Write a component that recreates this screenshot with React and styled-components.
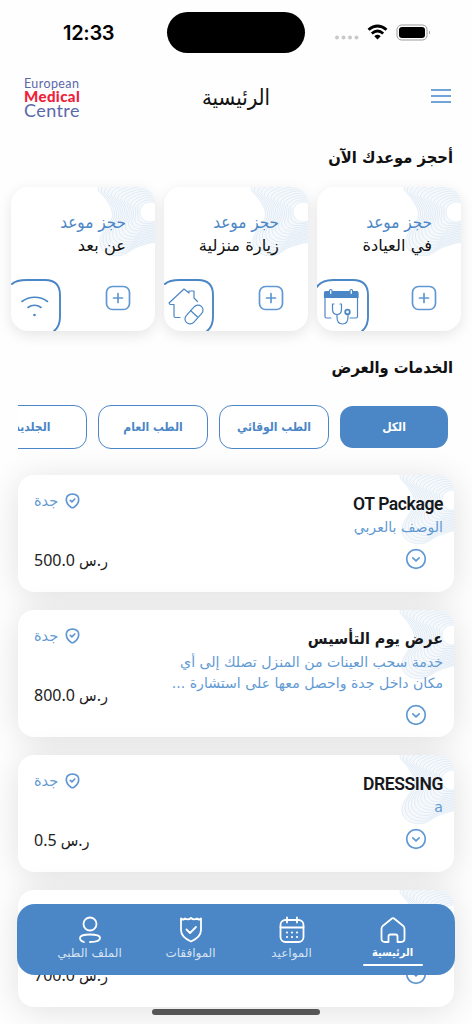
import React from 'react';
import styled, { createGlobalStyle } from 'styled-components';

const BLUE = '#4b86c6';

const GlobalStyle = createGlobalStyle`
  * {
    box-sizing: border-box;
  }

  body {
    margin: 0;
    background: #fefefe;
    font-family: 'DejaVu Sans Condensed', 'DejaVu Sans', sans-serif;
  }
`;

const Screen = styled.div`
  position: relative;
  width: 472px;
  height: 1024px;
  overflow: hidden;
  direction: rtl;
  display: flex;
  flex-direction: column;
`;

const StatusBar = styled.div`
  direction: ltr;
  display: grid;
  grid-template-columns: 167px 138px 167px;
  height: 65px;
  flex: none;
  align-items: center;
`;

const Time = styled.span`
  padding-left: 63px;
  font: 600 20px Inter, sans-serif;
  letter-spacing: -0.3px;
  color: #000;
`;

const Island = styled.div`
  height: 41px;
  border-radius: 21px;
  background: #000;
`;

const StatusIcons = styled.div`
  display: flex;
  align-items: center;
  padding-left: 29px;
`;

const Header = styled.header`
  display: grid;
  grid-template-columns: 100px 1fr 100px;
  align-items: center;
  height: 64px;
  flex: none;
`;

const MenuButton = styled.button`
  display: block;
  justify-self: start;
  margin-right: 21px;
  padding: 0;
  border: none;
  background: none;
`;

const PageTitle = styled.h1`
  margin: 0;
  text-align: center;
  font-size: 22px;
  font-weight: 400;
  color: #111;
`;

const Logo = styled.div`
  direction: ltr;
  padding-left: 24px;
  font-family: Lato, sans-serif;
  color: #5a68a8;
`;

const LogoLine = styled.div`
  font-size: ${(p) => p.$size}px;
  line-height: ${(p) => p.$line}px;
  font-weight: ${(p) => (p.$strong ? 900 : 400)};
  color: ${(p) => (p.$strong ? '#ee2139' : 'inherit')};
  letter-spacing: 0.4px;
`;

const SectionTitle = styled.h2`
  margin: 0;
  padding-right: 19px;
  height: ${(p) => p.$height}px;
  line-height: ${(p) => p.$height}px;
  flex: none;
  font-size: 16.4px;
  font-weight: 700;
  color: #111;
`;

const BookingRow = styled.div`
  display: flex;
  gap: 9px;
  padding: 0 11px;
  flex: none;
`;

const BookingCard = styled.div`
  position: relative;
  width: 144px;
  height: 144px;
  border-radius: 17px;
  background: #fff;
  box-shadow: 0 4px 14px rgba(0, 0, 0, 0.1);
  overflow: hidden;
  display: flex;
  flex-direction: column;
  justify-content: space-between;
`;

const BookingText = styled.div`
  position: relative;
  padding: 23px 29px 0 0;
  font-family: 'DejaVu Sans', sans-serif;
  font-size: 16.3px;
  line-height: 24px;
  color: #111;
  white-space: nowrap;
`;

const Accent = styled.div`
  font-family: 'DejaVu Sans Condensed', 'DejaVu Sans', sans-serif;
  font-size: 17px;
  color: ${BLUE};
`;

const BookingFooter = styled.div`
  display: flex;
  justify-content: space-between;
  align-items: flex-start;
  padding-right: 24px;
  height: 52px;
`;

const PlusIcon = styled.svg`
  margin-top: 6px;
`;

const Waves = styled.svg`
  position: absolute;
  top: 0;
  right: ${(p) => p.$shift}px;
`;

const Chips = styled.div`
  display: flex;
  gap: 11px;
  align-items: center;
  height: 44px;
  margin: 0 18px;
  padding-right: 6px;
  overflow: hidden;
  flex: none;
`;

const Chip = styled.button`
  flex: none;
  width: ${(p) => (p.$active ? 108 : 110)}px;
  height: ${(p) => (p.$active ? 42 : 44)}px;
  border-radius: 13px;
  border: ${(p) => (p.$active ? 'none' : `1px solid ${BLUE}`)};
  background: ${(p) => (p.$active ? BLUE : '#fff')};
  color: ${(p) => (p.$active ? '#fff' : BLUE)};
  font: 700 12px 'DejaVu Sans Condensed', 'DejaVu Sans', sans-serif;
  white-space: nowrap;
  padding: 0;
`;

const Offers = styled.div`
  display: flex;
  flex-direction: column;
  gap: 18px;
  padding: 26px 18px 0;
`;

const OfferCard = styled.article`
  position: relative;
  flex: none;
  display: flex;
  justify-content: space-between;
  height: ${(p) => (p.$tall ? 127 : 117)}px;
  border-radius: 16px;
  background: #fff;
  box-shadow: 0 4px 34px rgba(0, 0, 0, 0.12);
  overflow: hidden;
`;

const OfferMain = styled.div`
  position: relative;
  padding: 17px 11px 0 0;
  display: flex;
  flex-direction: column;
`;

const OfferTitle = styled.h3`
  margin: 0;
  height: 25px;
  font-family: ${(p) => (p.$latin ? 'Roboto' : "'DejaVu Sans Condensed'")}, 'DejaVu Sans', sans-serif;
  font-size: ${(p) => (p.$latin ? 17.5 : 16)}px;
  letter-spacing: ${(p) => (p.$latin ? '-0.4px' : 'normal')};
  line-height: 24px;
  font-weight: 600;
  color: #17181c;
`;

const OfferText = styled.p`
  margin: 0;
  font-family: 'DejaVu Sans', sans-serif;
  font-size: 14.1px;
  line-height: 21px;
  color: #629ad3;
  white-space: nowrap;
`;

const Expand = styled.svg`
  margin: 10px 16px 0 0;
`;

const OfferSide = styled.div`
  display: flex;
  flex-direction: column;
  align-items: flex-end;
  padding: 14px 0 0 16px;
`;

const City = styled.div`
  display: flex;
  align-items: center;
  gap: 7px;
  height: 24px;
  font-family: 'DejaVu Sans', sans-serif;
  font-size: 14.5px;
  color: #629ad3;
`;

const Price = styled.div`
  margin-top: 35px;
  line-height: 24px;
  font-family: 'Noto Sans', 'DejaVu Sans Condensed', sans-serif;
  font-size: 16px;
  color: #222;
`;

const NavBar = styled.nav`
  position: absolute;
  left: 17px;
  top: 904px;
  width: 438px;
  height: 71px;
  border-radius: 18px;
  background: ${BLUE};
  display: flex;
  padding: 0 12px;
`;

const NavItem = styled.div`
  width: 101px;
  padding-top: 12px;
  display: flex;
  flex-direction: column;
  align-items: center;
  font-family: ${(p) => (p.$active ? "'DejaVu Sans Condensed'" : "'DejaVu Sans'")}, sans-serif;
  font-size: ${(p) => (p.$active ? 11 : 12)}px;
  line-height: 18px;
  font-weight: ${(p) => (p.$active ? 700 : 400)};
  color: ${(p) => (p.$active ? '#fff' : '#d5e3f2')};
  white-space: nowrap;
`;

const Underline = styled.div`
  width: 60px;
  height: 2px;
  margin-top: 2px;
  border-radius: 1px;
  background: #fff;
`;

const HomeIndicator = styled.div`
  position: absolute;
  left: 152px;
  top: 1009px;
  width: 168px;
  height: 6px;
  border-radius: 3px;
  background: #555;
`;

// outline of the topographic pattern, relative to the card's top corner
const OUTLINE = [
  [1, 1], [8, 11], [14, 21], [15, 31], [8, 42], [3, 52], [5, 62], [14, 68],
  [26, 68], [38, 61], [50, 57], [70, 50], [80, 25], [70, -8], [40, -14], [12, -8],
];

const HOLE = { x: 53, y: 25, r: 10 };

function ringPath(t) {
  const pts = OUTLINE.map(([x, y]) => {
    const a = Math.atan2(y - HOLE.y, x - HOLE.x);
    const cx = HOLE.x + HOLE.r * Math.cos(a);
    const cy = HOLE.y + HOLE.r * Math.sin(a);
    return [x + (cx - x) * t, y + (cy - y) * t];
  });
  const n = pts.length;
  let d = `M${pts[0][0]} ${pts[0][1]}`;
  for (let i = 0; i < n; i++) {
    const [p0, p1, p2, p3] = [pts[(i + n - 1) % n], pts[i], pts[(i + 1) % n], pts[(i + 2) % n]];
    d += `C${p1[0] + (p2[0] - p0[0]) / 6} ${p1[1] + (p2[1] - p0[1]) / 6} ${p2[0] - (p3[0] - p1[0]) / 6} ${p2[1] - (p3[1] - p1[1]) / 6} ${p2[0]} ${p2[1]}`;
  }
  return d;
}

const RINGS = Array.from({ length: 14 }, (_, i) => ringPath(i / 13));

function WavePattern({ shift = 0 }) {
  return (
    <Waves $shift={shift} width="58" height="72" viewBox="0 0 58 72" fill="none">
      <path d={`${RINGS[0]}Z${RINGS[13]}Z`} fill="#4b86c6" fillOpacity="0.05" fillRule="evenodd" />
      {RINGS.map((d, i) => (
        <path key={i} d={d} stroke="#4b86c6" strokeOpacity="0.2" strokeWidth="0.6" />
      ))}
    </Waves>
  );
}

function TileFrame({ wide, children }) {
  const w = wide ? 52 : 50;
  return (
    <svg width={w} height="52" viewBox={`0 0 ${w} 52`} fill="none" stroke={BLUE} strokeWidth="1.2" strokeLinecap="round" strokeLinejoin="round">
      <path d={`M${wide ? -1 : 1} ${wide ? 9 : 5}Q${wide ? 4 : 5} 1 16 1H${w - 16}Q${w - 1} 1 ${w - 1} 16V38Q${w - 1} 48 ${w - 8} 53`} strokeWidth="1.9" />
      {children}
    </svg>
  );
}

function ClinicIcon() {
  return (
    <TileFrame wide>
      <path d="M14 39H9.500Q8 39 8 37.500V13H40.500V37.500Q40.500 39 39 39H33" />
      <path d="M7.500 18.500V14Q7.500 12.500 9 12.500H39.500Q41 12.500 41 14V18.500Z" fill={BLUE} />
      <rect x="12.500" y="10.500" width="2.500" height="5" rx="1.200" fill="#fff" />
      <rect x="33" y="10.500" width="2.500" height="5" rx="1.200" fill="#fff" />
      <path d="M17 25H15.500V30Q15.500 35.500 20 35.500T24.500 30V25H23M20 36V38Q20 45 25.500 45T31 38V35" />
      <circle cx="30.500" cy="33" r="2.300" strokeWidth="1.800" />
    </TileFrame>
  );
}

function HomeVisitIcon() {
  return (
    <TileFrame>
      <path d="M16 38.500H11.500Q10 38.500 10 37V25.500H6L5 24L20 10L25 14V12H30V19L33.500 22.500" />
      <rect x="19" y="30.500" width="22" height="10" rx="5" transform="rotate(-48 30 35.500)" />
      <path d="M26.500 31.500L33.500 38" />
    </TileFrame>
  );
}

function RemoteIcon() {
  return (
    <TileFrame>
      <path d="M11 22.500A21 21 0 0 1 36.500 22.500M17 28.500A10.500 10.500 0 0 1 30 28.500" strokeWidth="1.600" />
      <circle cx="23.500" cy="36" r="0.700" fill={BLUE} />
    </TileFrame>
  );
}

function NavIcon({ name }) {
  return (
    <svg width="28" height="28" viewBox="0 0 28 28" fill="none" stroke="#fff" strokeWidth="1.800" strokeLinecap="round" strokeLinejoin="round">
      {name === 'home' && (
        <path d="M12.300 3Q14 1.300 15.700 3L24 9.800Q25.500 11 25.500 13V22.500Q25.500 26 22 26H18.500V20.500Q18.500 18.500 16.500 18.500H11.500Q9.500 18.500 9.500 20.500V26H6Q2.500 26 2.500 22.500V13Q2.500 11 4 9.800Z" />
      )}
      {name === 'calendar' && (
        <>
          <rect x="2.500" y="4" width="23" height="22" rx="5" />
          <path d="M2.500 11.500H25.500M9 1.500V6.500M19 1.500V6.500" />
          <path d="M9 16.500H9.010M14 16.500H14.010M19 16.500H19.010M9 21H9.010M14 21H14.010M19 21H19.010" strokeWidth="2.200" />
        </>
      )}
      {name === 'shield' && (
        <path d="M14 2Q11.500 4.500 8 2.500Q6 4.500 4 2.500V14Q4 21 14 25.500Q24 21 24 14V2.500Q22 4.500 20 2.500Q16.500 4.500 14 2ZM9.500 13.500L13 17L19 11" />
      )}
      {name === 'profile' && (
        <>
          <circle cx="14" cy="8" r="6.500" />
          <path d="M8 26Q4 25 4 22Q4 18.500 14 18.500T24 22Q24 26 14 26" />
        </>
      )}
    </svg>
  );
}

function PinIcon() {
  return (
    <svg width="15" height="16" viewBox="0 0 15 16" fill="none" stroke="#5f98d2" strokeWidth="1.700" strokeLinecap="round" strokeLinejoin="round">
      <path d="M7.500 1Q13.700 1.500 13.700 6.500Q13.700 11 9 14.300Q7.500 15.200 6 14.300Q1.300 11 1.300 6.500Q1.300 1.500 7.500 1Z" />
      <path d="M5.300 7.300L6.900 8.800L9.800 6" />
    </svg>
  );
}

const bookings = [
  { place: 'في العيادة', icon: <ClinicIcon /> },
  { place: 'زيارة منزلية', icon: <HomeVisitIcon /> },
  { place: 'عن بعد', icon: <RemoteIcon /> },
];

const categories = ['الكل', 'الطب الوقائي', 'الطب العام', 'الجلدية'];

const offers = [
  { title: 'OT Package', latin: true, lines: ['الوصف بالعربي'], price: '500.0' },
  { title: 'عرض يوم التأسيس', lines: ['خدمة سحب العينات من المنزل تصلك إلى أي', 'مكان داخل جدة واحصل معها على استشارة ...'], price: '800.0' },
  { title: 'DRESSING', latin: true, lines: ['a'], price: '0.5' },
  { title: '', lines: ['\u00a0'], price: '700.0' },
];

const tabs = [
  { icon: 'home', label: 'الرئيسية' },
  { icon: 'calendar', label: 'المواعيد' },
  { icon: 'shield', label: 'الموافقات' },
  { icon: 'profile', label: 'الملف الطبي' },
];

function App() {
  return (
    <Screen>
      <GlobalStyle />
      <StatusBar>
        <Time>12:33</Time>
        <Island />
        <StatusIcons>
          <svg width="100" height="20" viewBox="0 0 100 20" fill="none">
            <g fill="#c9c9c9">
              <circle cx="3" cy="14.500" r="2" />
              <circle cx="9.500" cy="14.500" r="2" />
              <circle cx="16" cy="14.500" r="2" />
              <circle cx="22.500" cy="14.500" r="2" />
            </g>
            <g stroke="#000" strokeWidth="2.800">
              <path d="M34.500 6.800Q43.500 -0.800 52.500 6.800" />
              <path d="M37.800 10.500Q43.500 5.500 49.200 10.500" />
            </g>
            <path d="M40.300 13.200Q43.500 10.500 46.700 13.200L43.500 16.500Z" fill="#000" />
            <rect x="63" y="2" width="30" height="15" rx="4.500" stroke="#999" />
            <rect x="65" y="4" width="26" height="11" rx="3" fill="#000" />
            <path d="M95 7.500Q97 9.500 95 11.500Z" fill="#999" />
          </svg>
        </StatusIcons>
      </StatusBar>

      <Header>
        <MenuButton>
          <svg width="20" height="14" viewBox="0 0 20 14" stroke="#4387cb" strokeWidth="1.700">
            <path d="M0 1H20M0 7H20M0 13H20" />
          </svg>
        </MenuButton>
        <PageTitle>الرئيسية</PageTitle>
        <Logo>
          <LogoLine $size={12.5} $line={13}>European</LogoLine>
          <LogoLine $size={15} $line={13} $strong>Medical</LogoLine>
          <LogoLine $size={18} $line={15}>Centre</LogoLine>
        </Logo>
      </Header>

      <SectionTitle $height={58}>أحجز موعدك الآن</SectionTitle>
      <BookingRow>
        {bookings.map((b) => (
          <BookingCard key={b.place}>
            <WavePattern />
            <BookingText>
              <Accent>حجز موعد</Accent>
              {b.place}
            </BookingText>
            <BookingFooter>
              <PlusIcon width="26" height="26" viewBox="0 0 26 26" fill="none" stroke="#5f98d2" strokeWidth="1.700" strokeLinecap="round">
                <rect x="1.500" y="1.500" width="23" height="23" rx="6" />
                <path d="M13 8.500V17.500M8.500 13H17.500" />
              </PlusIcon>
              {b.icon}
            </BookingFooter>
          </BookingCard>
        ))}
      </BookingRow>

      <SectionTitle $height={74}>الخدمات والعرض</SectionTitle>
      <Chips>
        {categories.map((c, i) => (
          <Chip key={c} $active={i === 0}>{c}</Chip>
        ))}
      </Chips>

      <Offers>
        {offers.map((o) => (
          <OfferCard key={o.price} $tall={o.lines.length > 1}>
            <WavePattern shift={-3} />
            <OfferMain>
              <OfferTitle $latin={o.latin}>{o.title}</OfferTitle>
              {o.lines.map((line) => (
                <OfferText key={line}>{line}</OfferText>
              ))}
              <Expand width="22" height="22" viewBox="0 0 22 22" fill="none" stroke="#5f98d2" strokeWidth="1.700" strokeLinecap="round" strokeLinejoin="round">
                <circle cx="11" cy="11" r="9.300" />
                <path d="M7.800 9.800L11 12.800L14.200 9.800" />
              </Expand>
            </OfferMain>
            <OfferSide>
              <City>
                <PinIcon />
                جدة
              </City>
              <Price>ر.س {o.price}</Price>
            </OfferSide>
          </OfferCard>
        ))}
      </Offers>

      <NavBar>
        {tabs.map((t, i) => (
          <NavItem key={t.icon} $active={i === 0}>
            <NavIcon name={t.icon} />
            {t.label}
            {i === 0 && <Underline />}
          </NavItem>
        ))}
      </NavBar>
      <HomeIndicator />
    </Screen>
  );
}

export default App;
